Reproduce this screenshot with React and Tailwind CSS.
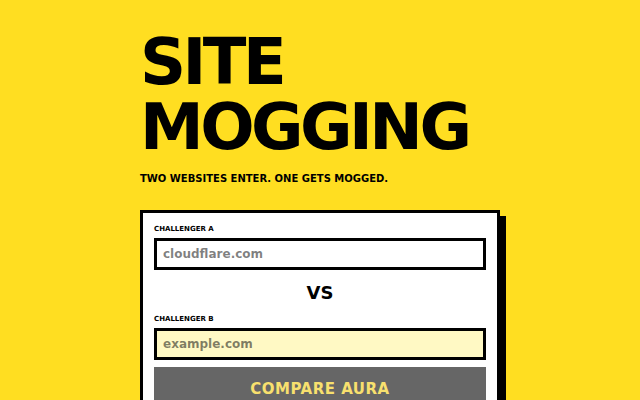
import React from 'react';

const App = () => {
  return (
    <div
      className="min-h-screen bg-[#ffde21] text-black pt-[30px]"
      style={{ fontFamily: '"DejaVu Sans", Verdana, sans-serif' }}
    >
      <div className="w-[360px] mx-auto">
        <h1 className="text-[64px] leading-[65px] font-bold tracking-[-0.055em]">
          SITE
          <br />
          MOGGING
        </h1>
        <p className="mt-[11px] text-[10px] leading-[15px] font-bold">
          TWO WEBSITES ENTER. ONE GETS MOGGED.
        </p>

        <div className="mt-[24px] bg-white border-[3px] border-black shadow-[6px_6px_0_#000] p-[11px]">
          <label className="block text-[7px] leading-[10px] font-bold mb-1">
            CHALLENGER A
          </label>
          <input
            type="text"
            placeholder="cloudflare.com"
            className="block w-full h-[32px] border-[3px] border-black bg-white px-[6px] text-xs font-bold outline-none placeholder:text-black/50"
          />

          <div className="pt-[9px] pb-[7px] text-center text-[18px] leading-[28px] font-bold">
            VS
          </div>

          <label className="block text-[7px] leading-[10px] font-bold mb-1">
            CHALLENGER B
          </label>
          <input
            type="text"
            placeholder="example.com"
            className="block w-full h-[32px] border-[3px] border-black bg-[#fff9c4] px-[6px] text-xs font-bold outline-none placeholder:text-black/50"
          />

          <button className="mt-[7px] w-full bg-[#666666] text-[#f8e06e] text-[15px] leading-[24px] font-bold tracking-[0.5px] pt-[10px] pb-[10px]">
            COMPARE AURA
          </button>
        </div>
      </div>
    </div>
  );
};

export default App;
